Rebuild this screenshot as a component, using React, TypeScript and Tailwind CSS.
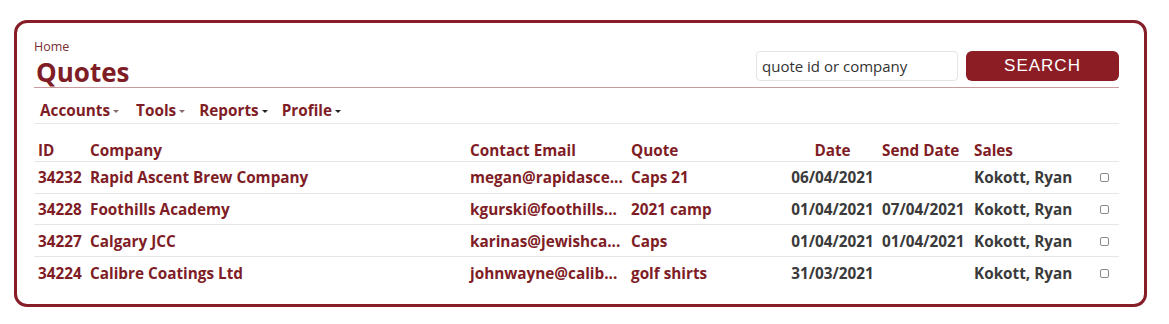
import React from "react";

const rows = [
  { id: "34232", company: "Rapid Ascent Brew Company", email: "megan@rapidasce...", quote: "Caps 21", date: "06/04/2021", send: "", sales: "Kokott, Ryan" },
  { id: "34228", company: "Foothills Academy", email: "kgurski@foothills...", quote: "2021 camp", date: "01/04/2021", send: "07/04/2021", sales: "Kokott, Ryan" },
  { id: "34227", company: "Calgary JCC", email: "karinas@jewishca...", quote: "Caps", date: "01/04/2021", send: "01/04/2021", sales: "Kokott, Ryan" },
  { id: "34224", company: "Calibre Coatings Ltd", email: "johnwayne@calib...", quote: "golf shirts", date: "31/03/2021", send: "", sales: "Kokott, Ryan" },
];

const gridCols = "grid grid-cols-[52px_380px_161px_160px_91px_92px_120px_28px]";

function Caret({ dark }: { dark?: boolean }) {
  return (
    <span
      className={`ml-[3px] inline-block h-0 w-0 border-x-[3px] border-t-[3px] border-x-transparent align-middle ${
        dark ? "border-t-[#222]" : "border-t-[#8a6a6c]"
      }`}
    />
  );
}

export default function App() {
  return (
    <div className="min-h-[324px] w-[1169px] bg-white pl-[14px] pt-[20px] font-['Open_Sans',sans-serif]">
      <div className="h-[287px] w-[1133px] rounded-[13px] border-[3px] border-[#861d27] bg-white pl-[17px] pr-[25px] pt-[15px]">
        {/* Header */}
        <div className="flex items-end justify-between border-b border-[#c79a9d]">
          <div className="flex flex-col">
            <div className="text-[12.5px] leading-[17px] text-[#7a2e33]">Home</div>
            <div className="ml-[2px] mt-[2px] text-[26px] font-bold leading-[30px] text-[#7f1d26]">Quotes</div>
          </div>
          <div className="mb-[6px] flex gap-[8px]">
            <div className="flex h-[30px] w-[202px] items-center rounded-[4px] border border-[#e4e4e4] px-[5px] text-[15px] text-[#333]">
              quote id or company
            </div>
            <button className="h-[30px] w-[153px] rounded-[6px] bg-[#8c1d25] font-['Liberation_Sans',sans-serif] text-[17px] leading-[30px] tracking-[1px] text-white">
              SEARCH
            </button>
          </div>
        </div>

        {/* Nav */}
        <div className="flex items-center gap-[17px] border-b border-[#e8e8e8] pb-[3px] pl-[6px] pt-[12px] text-[15.3px] font-bold leading-[20px] text-[#7f1d26]">
          <span>Accounts<Caret /></span>
          <span>Tools<Caret /></span>
          <span className="-ml-[3px]">Reports<Caret dark /></span>
          <span className="-ml-[3px]">Profile<Caret dark /></span>
        </div>

        {/* Table */}
        <div className="mt-[16px] text-[15.3px] font-bold leading-[20px]">
          <div className={`${gridCols} h-[22px] border-b border-[#e6e6e6] text-[#7f1d26]`}>
            <div className="pl-[4px]">ID</div>
            <div className="pl-[4px]">Company</div>
            <div className="pl-[4px]">Contact Email</div>
            <div className="pl-[4px]">Quote</div>
            <div className="text-center">Date</div>
            <div className="pl-[4px]">Send Date</div>
            <div className="pl-[4px]">Sales</div>
            <div />
          </div>
          {rows.map((r, i) => (
            <div
              key={r.id}
              className={`${gridCols} h-[31.7px] items-center ${i < rows.length - 1 ? "border-b border-[#e6e6e6]" : ""}`}
            >
              <div className="pl-[4px] text-[#7f1d26]">{r.id}</div>
              <div className="pl-[4px] text-[#7f1d26]">{r.company}</div>
              <div className="pl-[4px] text-[#7f1d26]">{r.email}</div>
              <div className="pl-[4px] text-[#7f1d26]">{r.quote}</div>
              <div className="text-center text-[#3a3a3a]">{r.date}</div>
              <div className="pl-[4px] text-[#3a3a3a]">{r.send}</div>
              <div className="pl-[4px] text-[#3a3a3a]">{r.sales}</div>
              <div className="flex justify-center">
                <span className="mt-[1px] inline-block h-[9px] w-[9px] rounded-[2px] border border-[#8a8a8a] bg-white" />
              </div>
            </div>
          ))}
        </div>
      </div>
    </div>
  );
}
